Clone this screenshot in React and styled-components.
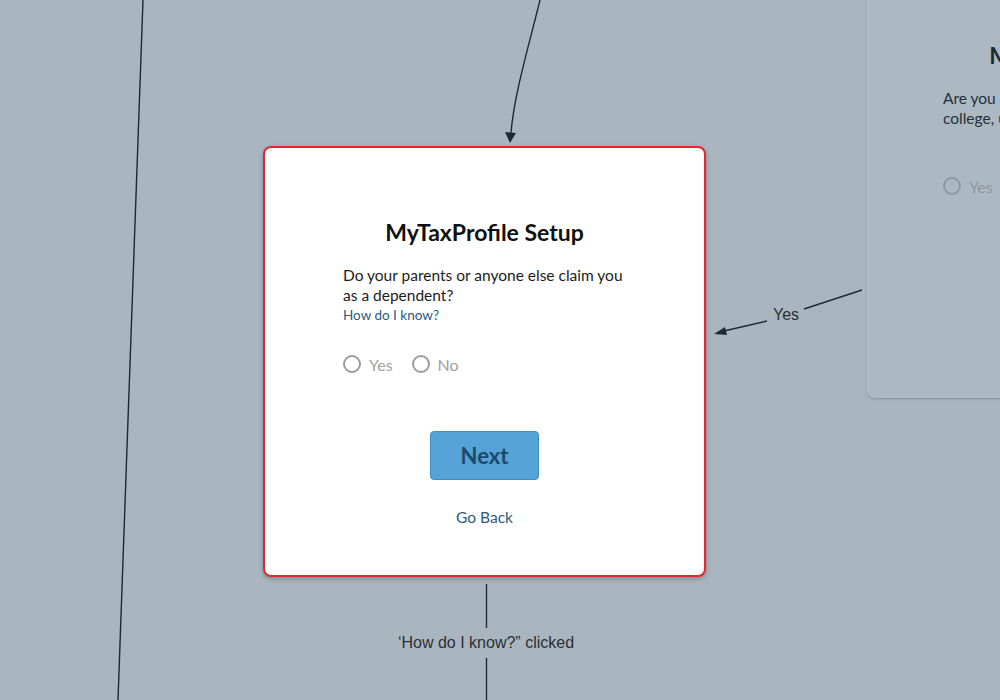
import React from 'react';
import styled, { createGlobalStyle } from 'styled-components';

const GlobalStyle = createGlobalStyle`
  html, body {
    margin: 0;
    padding: 0;
    background: #aab6bf;
  }
`;

const Canvas = styled.div`
  position: relative;
  width: 1000px;
  height: 700px;
  overflow: hidden;
  background: #aab6bf;
  font-family: Lato, 'Liberation Sans', sans-serif;
`;

const Wires = styled.svg`
  position: absolute;
  left: 0;
  top: 0;
  width: 1000px;
  height: 700px;
`;

const Node = styled.div`
  position: absolute;
  left: ${(p) => p.x}px;
  top: ${(p) => p.y}px;
  width: 443px;
  height: ${(p) => p.h}px;
  box-sizing: border-box;
  display: flex;
  flex-direction: column;
  align-items: center;
  border-radius: 8px;
  background: ${(p) => (p.dim ? '#adb9c2' : '#ffffff')};
  border: 2px solid ${(p) => (p.active ? '#e6262d' : '#b0bcc4')};
  box-shadow: ${(p) =>
    p.dim ? '0 1px 2px rgba(60, 75, 85, 0.35)' : '0 2px 5px rgba(0, 0, 0, 0.25)'};
  padding-top: 69px;
`;

const Title = styled.h1`
  margin: 0;
  font-family: Lato, 'Liberation Sans', sans-serif;
  font-weight: 700;
  font-size: 23px;
  line-height: 30px;
  color: ${(p) => (p.dim ? '#1f2a33' : '#111111')};
`;

const Question = styled.div`
  align-self: stretch;
  padding: 0 75px 0 ${(p) => p.inset}px;
  margin-top: 18px;
`;

const Prompt = styled.p`
  margin: 0;
  font-size: 15.5px;
  line-height: 20px;
  color: ${(p) => (p.dim ? '#24303a' : '#1c1c1c')};
`;

const HelpLink = styled.a`
  display: block;
  font-size: 13.5px;
  line-height: 20px;
  color: ${(p) => (p.dim ? '#2c4a60' : '#2b5a7d')};
  text-decoration: none;
`;

const Choices = styled.div`
  display: flex;
  gap: 19px;
  margin-top: ${(p) => (p.dim ? 48 : 29)}px;
  height: 20px;
  align-items: center;
`;

const Choice = styled.label`
  display: flex;
  align-items: center;
  gap: 8px;
  font-size: 16px;
  color: ${(p) => (p.dim ? '#8c979f' : '#a2a2a2')};
`;

const Dot = styled.span`
  width: 14px;
  height: 14px;
  border-radius: 50%;
  border: 2px solid ${(p) => (p.dim ? '#8c979f' : '#9c9c9c')};
`;

const NextButton = styled.button`
  margin-top: 57px;
  width: 109px;
  height: 49px;
  border-radius: 4px;
  border: 1px solid ${(p) => (p.dim ? '#5d87a6' : '#3f8cc6')};
  background: ${(p) => (p.dim ? '#6f9cbd' : '#56a3d7')};
  color: #1d4a6c;
  font-family: Lato, 'Liberation Sans', sans-serif;
  font-weight: 700;
  font-size: 22px;
  cursor: pointer;
`;

const BackLink = styled.a`
  margin-top: 27px;
  font-size: 15.5px;
  line-height: 20px;
  color: ${(p) => (p.dim ? '#2c4a60' : '#2b5a7d')};
  text-decoration: none;
`;

const EdgeLabel = styled.div`
  position: absolute;
  left: ${(p) => p.x}px;
  top: ${(p) => p.y}px;
  transform: translate(-50%, -50%);
  white-space: nowrap;
  font-family: 'Liberation Sans', Arial, sans-serif;
  font-size: 16px;
  color: #2b2f33;
`;

const ProfileCard = ({ x, y, h, dim, active, inset, children }) => (
  <Node x={x} y={y} h={h} dim={dim} active={active}>
    <Title dim={dim}>MyTaxProfile Setup</Title>
    <Question inset={inset}>
      <Prompt dim={dim}>{children}</Prompt>
      {!dim && <HelpLink href="#">How do I know?</HelpLink>}
      <Choices dim={dim}>
        <Choice dim={dim}>
          <Dot dim={dim} />
          Yes
        </Choice>
        <Choice dim={dim}>
          <Dot dim={dim} />
          No
        </Choice>
      </Choices>
    </Question>
    <NextButton dim={dim}>Next</NextButton>
    <BackLink dim={dim} href="#">Go Back</BackLink>
  </Node>
);

export default function App() {
  return (
    <>
      <GlobalStyle />
      <Canvas>
        <Wires viewBox="0 0 1000 700">
          <g stroke="#1e2a33" strokeWidth="1.4" fill="none">
            <path d="M143 0 L118 700" />
            <path d="M540 0 C529 45 514 95 511 133" />
            <path d="M862 290 L804 309" />
            <path d="M767 321 L724 331" />
            <path d="M486.5 584 L486.5 628" />
            <path d="M486.5 658 L486.5 700" />
          </g>
          <g fill="#1e2a33">
            <polygon points="505,132 516,133 510,143" />
            <polygon points="714,334 725,327 727,335" />
          </g>
        </Wires>

        <ProfileCard x={867} y={-31} h={429} inset={74} dim>
          Are you a full-time student at a
          <br />
          college, university or trade school?
        </ProfileCard>

        <ProfileCard x={263} y={146} h={431} inset={78} active>
          Do your parents or anyone else claim you as a dependent?
        </ProfileCard>

        <EdgeLabel x={786} y={315}>Yes</EdgeLabel>
        <EdgeLabel x={486} y={643}>‘How do I know?” clicked</EdgeLabel>
      </Canvas>
    </>
  );
}
